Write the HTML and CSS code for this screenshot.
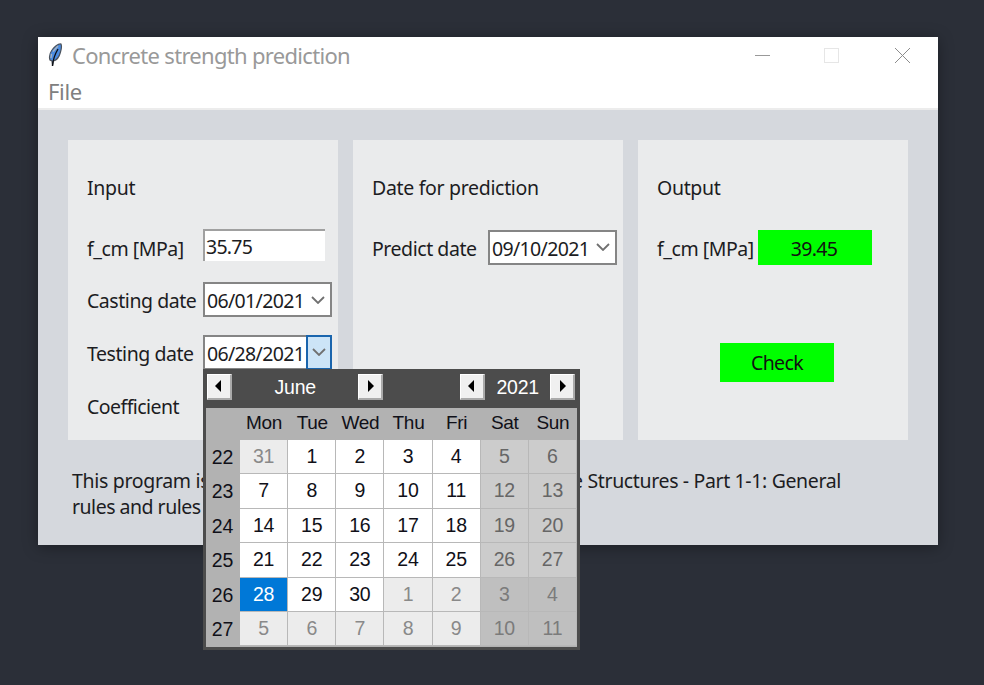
FILE: index.html
```html
<!DOCTYPE html>
<html lang="en">
<head>
<meta charset="utf-8">
<title>Concrete strength prediction</title>
<link rel="stylesheet" href="styles.css">
</head>
<body>
<main class="window">
  <header class="titlebar">
    <svg class="feather" width="16" height="26" viewBox="0 0 16 26">
      <path d="M13 2 C10 1.500 6 5 4 8 C1.500 11.500 1 15 2 18 L4 19 L4.500 24 L5.500 19 C9 18 11.500 14 12.500 10 C13.500 7 13.700 4 13 2Z" fill="#4a8be0" stroke="#4b525c" stroke-width="1.200"/>
      <path d="M10 7 C7 12 5 16 4.500 24" fill="none" stroke="#0b0d12" stroke-width="1.300"/>
      <path d="M10 4 L5 9.500 M3.500 12 L3 16" stroke="#a9b4c0" stroke-width="1.300"/>
    </svg>
    <h1 class="title">Concrete strength prediction</h1>
    <svg class="controls" width="160" height="18" viewBox="0 0 160 18" fill="none" shape-rendering="crispEdges">
      <path d="M0 8.500H15" stroke="#999"/>
      <rect x="69.500" y="1.500" width="14" height="14" stroke="#e6e6e6"/>
      <path d="M140 1L155 16M155 1L140 16" stroke="#8c8c8c" shape-rendering="auto"/>
    </svg>
  </header>
  <nav class="menu"><span>File</span></nav>
  <div class="content">
    <div class="panels">
      <section class="panel">
        <h2>Input</h2>
        <div class="row"><label>f_cm [MPa]</label><div class="entry">35.75</div></div>
        <div class="row"><label>Casting date</label><div class="combo"><span class="date">06/01/2021</span><span class="arrow"><svg width="14" height="8" viewBox="0 0 14 8"><path d="M1 1L7 7L13 1"/></svg></span></div></div>
        <div class="row"><label>Testing date</label><div class="combo"><span class="date">06/28/2021</span><span class="arrow active"><svg width="14" height="8" viewBox="0 0 14 8"><path d="M1 1L7 7L13 1"/></svg></span></div></div>
        <div class="row"><label class="coef">Coefficient</label></div>
      </section>
      <section class="panel">
        <h2>Date for prediction</h2>
        <div class="row"><label>Predict date</label><div class="combo"><span class="date">09/10/2021</span><span class="arrow"><svg width="14" height="8" viewBox="0 0 14 8"><path d="M1 1L7 7L13 1"/></svg></span></div></div>
      </section>
      <section class="panel output">
        <h2>Output</h2>
        <div class="row"><label>f_cm [MPa]</label><div class="result">39.45</div></div>
        <div class="check">Check</div>
      </section>
    </div>
    <footer class="note">
      <div class="line"><span>This program is</span><span class="tail">e Structures - Part 1-1: General</span></div>
      <div class="line"><span class="rules">rules and rules</span></div>
    </footer>
  </div>
</main>
<div class="calendar">
  <div class="calhead">
    <span class="btn prev"></span><span class="month">June</span><span class="btn next"></span>
    <span class="btn prev year-prev"></span><span class="year">2021</span><span class="btn next"></span>
  </div>
  <div class="days">
    <b></b><b>Mon</b><b>Tue</b><b>Wed</b><b>Thu</b><b>Fri</b><b>Sat</b><b>Sun</b>
    <i>22</i><span class="o">31</span><span>1</span><span>2</span><span>3</span><span>4</span><span class="w">5</span><span class="w">6</span>
    <i>23</i><span>7</span><span>8</span><span>9</span><span>10</span><span>11</span><span class="w">12</span><span class="w">13</span>
    <i>24</i><span>14</span><span>15</span><span>16</span><span>17</span><span>18</span><span class="w">19</span><span class="w">20</span>
    <i>25</i><span>21</span><span>22</span><span>23</span><span>24</span><span>25</span><span class="w">26</span><span class="w">27</span>
    <i>26</i><span class="sel">28</span><span>29</span><span>30</span><span class="o">1</span><span class="o">2</span><span class="ow">3</span><span class="ow">4</span>
    <i>27</i><span class="o">5</span><span class="o">6</span><span class="o">7</span><span class="o">8</span><span class="o">9</span><span class="ow">10</span><span class="ow">11</span>
  </div>
</div>
</body>
</html>
```
FILE: styles.css
```css
* { box-sizing: border-box; }
body {
  margin: 0;
  height: 685px;
  padding: 37px 46px 0 38px;
  overflow: hidden;
  background: #2b2f38;
  font: 19.5px/26px "Noto Sans", sans-serif;
  letter-spacing: -.32px;
  color: #1c1c22;
}
.window {
  width: 900px;
  height: 508px;
  background: #d5d8dd;
  box-shadow: 0 2px 14px rgba(0, 0, 0, .35);
}
.titlebar {
  display: flex;
  align-items: center;
  height: 38px;
  padding-left: 10px;
  background: #fff;
}
.feather { width: 16px; margin-top: -3px; }
.title {
  margin: -2px 0 0 8px;
  width: 680px;
  font-size: 22px;
  font-weight: 400;
  letter-spacing: -.69px;
  color: #999;
}
.controls { margin-left: 3px; }
.menu {
  height: 35px;
  padding: 3px 0 0 10px;
  border-bottom: 2px solid #ececec;
  background: #fff;
  font-size: 22px;
  color: #808080;
}
.content { padding: 30px 30px 0; }
.panels { display: flex; gap: 15px; }
.panel {
  width: 270px;
  height: 300px;
  padding: 35px 0 0 19px;
  background: #eaebec;
}
h2 { margin: 0 0 20px; font: inherit; }
.row { display: flex; align-items: center; height: 52.6px; }
label { width: 116px; padding-top: 3px; letter-spacing: -.45px; white-space: nowrap; }
.coef { letter-spacing: -.55px; }
.entry {
  width: 122px;
  height: 32px;
  margin-top: -4px;
  padding-left: 1px;
  border: solid #a0a0a0;
  border-width: 2px 0 0 2px;
  background: #fff;
  line-height: 31px;
  letter-spacing: -.75px;
}
.combo {
  display: flex;
  width: 129px;
  height: 35px;
  border: 2px solid #858585;
  background: #fff;
}
.date {
  width: 100px;
  padding-left: 2px;
  line-height: 33px;
  letter-spacing: -.66px;
}
.arrow {
  display: grid;
  place-items: center;
  width: 25px;
  flex: none;
}
.arrow path { fill: none; stroke: #707070; stroke-width: 1.8; }
.arrow.active {
  width: 26px;
  height: 35px;
  margin: -2px -2px -2px 1px;
  border: 2px solid #1a65ad;
  background: #cce4f7;
}
.output label { width: 101px; }
.result, .check {
  width: 114px;
  height: 35px;
  background: #0f0;
  line-height: 37px;
  text-align: center;
  color: #111;
}
.result { padding-right: 2px; letter-spacing: -.65px; }
.check { height: 39px; margin: 69px 0 0 63px; line-height: 40px; letter-spacing: -.6px; }
.note { padding: 28px 0 0 4px; }
.line { display: flex; height: 26px; white-space: nowrap; }
.rules { letter-spacing: -.5px; }
.tail { margin-left: auto; margin-right: 67px; letter-spacing: -.36px; }
.calendar {
  position: absolute;
  left: 203px;
  top: 369px;
  width: 377px;
  height: 281px;
  padding: 0 3px 3px;
  background: #4c4c4c;
  font: 19.5px/33px "Liberation Sans", sans-serif;
  letter-spacing: -.2px;
}
.calhead {
  display: flex;
  align-items: center;
  height: 39px;
  padding: 0 2px 4px 1px;
  color: #fff;
}
.month { width: 127px; padding-top: 2px; text-align: center; }
.year { width: 65px; padding-top: 2px; text-align: center; }
.btn {
  display: grid;
  place-items: center;
  width: 25px;
  height: 26px;
  border: solid #fff;
  border-width: 1px 2px 2px 1px;
  border-right-color: #aaa;
  border-bottom-color: #aaa;
  background: #f0f0f0;
}
.btn::before { content: ""; border: solid transparent; border-width: 6px 0; }
.prev::before { margin-right: 2px; border-right: 6px solid #000; }
.next::before { margin-left: 2px; border-left: 6px solid #000; }
.year-prev { margin-left: 77px; }
.days {
  display: grid;
  grid-template-columns: 34px repeat(7, 48.15px);
  grid-template-rows: 32px repeat(6, 34.4px);
  height: 239px;
  background: #b2b2b2;
  text-align: center;
  color: #101018;
}
.days b, .days i { font-weight: 400; font-style: normal; }
.days b { line-height: 30px; font-size: 19px; letter-spacing: -.3px; }
.days i { line-height: 34px; padding-right: 1px; }
.days span {
  background: #fff;
  border: solid #b8b8b8;
  border-width: 0 1px 1px 0;
}
.days .o { background: #ececec; color: #898989; }
.days .w { background: #ccc; color: #666; }
.days .ow { background: #bfbfbf; color: #7b7b7b; }
.days .sel { background: #0078d7; color: #fff; }
```
